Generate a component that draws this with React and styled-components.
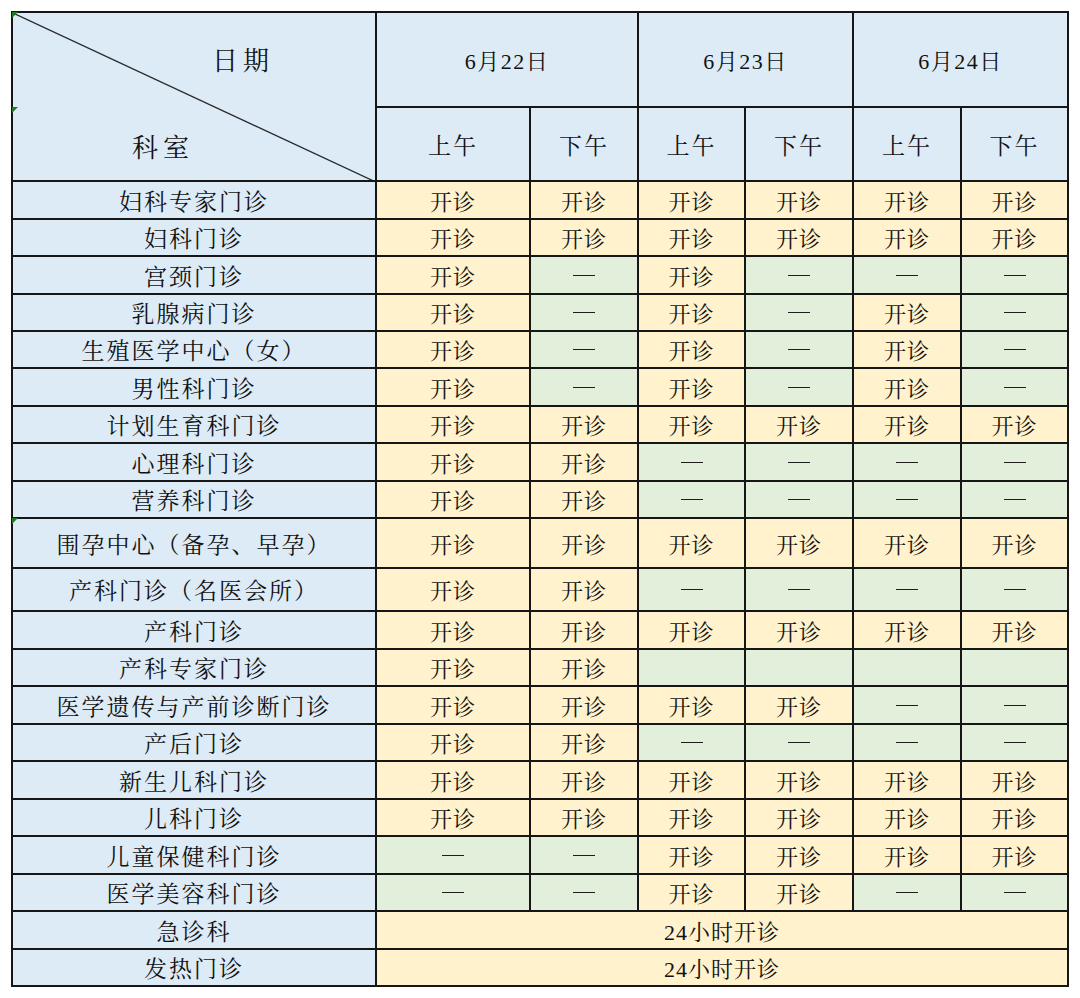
import React from "react";
import styled, { createGlobalStyle } from "styled-components";

const Global = createGlobalStyle`
  html, body { margin: 0; padding: 0; background: #ffffff; }
  body { font-family: "Liberation Serif", "Noto Serif CJK SC", "Noto Sans CJK SC", serif; color: #111; }
`;

const Page = styled.div`
  padding: 11px 0 0 11px;
`;

const Grid = styled.div`
  display: grid;
  width: max-content;
  grid-template-columns: 362px 152px 106px 105px 106px 106px 105px;
  grid-template-rows: 93px 72px ${(p) => p.$rows};
  gap: 2px;
  padding: 2px;
  background: #161616;
`;

const Cell = styled.div`
  position: relative;
  display: flex;
  align-items: center;
  justify-content: center;
  background: ${(p) => (p.$tone === "yes" ? "#fff2cc" : p.$tone === "no" ? "#e2efda" : "#ddebf7")};
  font-size: ${(p) => p.$size || 22}px;
  letter-spacing: ${(p) => (p.$spacing != null ? p.$spacing : 1)}px;
  grid-column: ${(p) => p.$col || "auto"};
  grid-row: ${(p) => p.$row || "auto"};
  white-space: nowrap;
`;

const Corner = styled.div`
  position: relative;
  grid-column: 1;
  grid-row: 1 / span 2;
  background: #ddebf7;
  display: flex;
  flex-direction: column;
  align-items: flex-start;
  padding-top: 36px;
  font-size: 26px;
  letter-spacing: 5px;
  line-height: 26px;
`;

const CornerDate = styled.span`
  margin-left: 199px;
`;

const CornerDept = styled.span`
  margin-left: 119px;
  margin-top: 61px;
`;

const Diagonal = styled.svg`
  position: absolute;
  inset: 0;
  width: 100%;
  height: 100%;
`;

const Marker = styled.span`
  position: absolute;
  left: -1px;
  top: ${(p) => p.$top || -1}px;
  width: 0;
  height: 0;
  border-top: 6px solid #1f7a1f;
  border-right: 6px solid transparent;
`;

const Dash = styled.span`
  display: block;
  width: 22px;
  height: 1px;
  background: #1e1e1e;
`;

const Y = "yes";
const N = "no";
const E = "empty";

const rows = [
  ["妇科专家门诊", [Y, Y, Y, Y, Y, Y]],
  ["妇科门诊", [Y, Y, Y, Y, Y, Y]],
  ["宫颈门诊", [Y, N, Y, N, N, N]],
  ["乳腺病门诊", [Y, N, Y, N, Y, N]],
  ["生殖医学中心（女）", [Y, N, Y, N, Y, N]],
  ["男性科门诊", [Y, N, Y, N, Y, N]],
  ["计划生育科门诊", [Y, Y, Y, Y, Y, Y]],
  ["心理科门诊", [Y, Y, N, N, N, N]],
  ["营养科门诊", [Y, Y, N, N, N, N]],
  ["围孕中心（备孕、早孕）", [Y, Y, Y, Y, Y, Y], true],
  ["产科门诊（名医会所）", [Y, Y, N, N, N, N]],
  ["产科门诊", [Y, Y, Y, Y, Y, Y]],
  ["产科专家门诊", [Y, Y, E, E, E, E]],
  ["医学遗传与产前诊断门诊", [Y, Y, Y, Y, N, N]],
  ["产后门诊", [Y, Y, N, N, N, N]],
  ["新生儿科门诊", [Y, Y, Y, Y, Y, Y]],
  ["儿科门诊", [Y, Y, Y, Y, Y, Y]],
  ["儿童保健科门诊", [N, N, Y, Y, Y, Y]],
  ["医学美容科门诊", [N, N, Y, Y, N, N]],
  ["急诊科", "all"],
  ["发热门诊", "all"],
];

const heights = [36, 35, 36, 35, 35, 36, 35, 36, 35, 48, 41, 36, 35, 36, 35, 36, 35, 36, 35, 36, 35];

export default function App() {
  return (
    <Page>
      <Global />
      <Grid $rows={heights.map((h) => h + "px").join(" ")}>
        <Corner>
          <Diagonal viewBox="0 0 100 100" preserveAspectRatio="none">
            <line x1="0" y1="0" x2="100" y2="101" stroke="#2b2b2b" strokeWidth="1.3" vectorEffect="non-scaling-stroke" />
          </Diagonal>
          <Marker />
          <Marker $top={94} />
          <CornerDate>日期</CornerDate>
          <CornerDept>科室</CornerDept>
        </Corner>
        {["6月22日", "6月23日", "6月24日"].map((d) => (
          <Cell key={d} $col="span 2" $size={22} $spacing={1.5}>
            {d}
          </Cell>
        ))}
        {["上午", "下午", "上午", "下午", "上午", "下午"].map((t, i) => (
          <Cell key={i} $size={23} $spacing={2}>
            {t}
          </Cell>
        ))}
        {rows.map(([name, vals, mark], ri) => (
          <React.Fragment key={ri}>
            <Cell $size={23} $spacing={2}>
              {mark && <Marker />}
              {name}
            </Cell>
            {vals === "all" ? (
              <Cell $tone="yes" $col="span 6">24小时开诊</Cell>
            ) : (
              vals.map((v, ci) => (
                <Cell key={ci} $tone={v === Y ? "yes" : "no"}>
                  {v === Y ? "开诊" : v === N ? <Dash /> : null}
                </Cell>
              ))
            )}
          </React.Fragment>
        ))}
      </Grid>
    </Page>
  );
}
